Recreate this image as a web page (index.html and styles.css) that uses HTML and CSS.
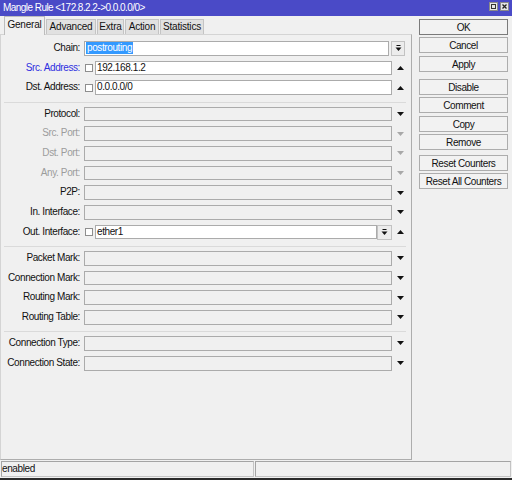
FILE: index.html
```html
<!DOCTYPE html>
<html>
<head>
<meta charset="utf-8">
<link rel="stylesheet" href="styles.css">
</head>
<body>
<div class="titlebar">
  <span class="title">Mangle Rule &lt;172.8.2.2-&gt;0.0.0.0/0&gt;</span>
  <div class="tbtns">
    <svg class="tbtn" width="9" height="9" viewBox="0 0 9 9"><rect x="0.5" y="0.5" width="8" height="8" fill="#e6e6e6" stroke="#8a8a8a"/><rect x="2.5" y="2.5" width="4" height="4" fill="none" stroke="#333"/></svg>
    <svg class="tbtn" width="9" height="9" viewBox="0 0 9 9"><rect x="0.5" y="0.5" width="8" height="8" fill="#e6e6e6" stroke="#8a8a8a"/><path d="M2.5 2.5 L6.5 6.5 M6.5 2.5 L2.5 6.5" stroke="#222" stroke-width="1.3"/></svg>
  </div>
</div>
<div class="content">
  <div class="main">
    <div class="tabs">
      <div class="tab active t-general">General</div>
      <div class="tab t-advanced">Advanced</div>
      <div class="tab t-extra">Extra</div>
      <div class="tab t-action">Action</div>
      <div class="tab t-stats">Statistics</div>
    </div>
    <div class="panel">
      <div class="group">
        <div class="row">
          <div class="lbl">Chain:</div>
          <div class="field chain">
            <div class="inp w"><span class="sel">postrouting</span></div>
            <div class="bdd"><svg width="7" height="7" viewBox="0 0 7 7"><rect x="1.5" y="0" width="4" height="1" fill="#111"/><polygon points="0.5,2.5 6.5,2.5 3.5,6" fill="#111"/></svg></div>
          </div>
        </div>
        <div class="row">
          <div class="lbl blue">Src. Address:</div>
          <div class="field"><div class="cb"></div><div class="inp w">192.168.1.2</div></div>
          <div class="arr"><svg width="7" height="4" viewBox="0 0 7 4"><polygon points="3.5,0 7,4 0,4" fill="#111"/></svg></div>
        </div>
        <div class="row">
          <div class="lbl">Dst. Address:</div>
          <div class="field"><div class="cb"></div><div class="inp w">0.0.0.0/0</div></div>
          <div class="arr"><svg width="7" height="4" viewBox="0 0 7 4"><polygon points="3.5,0 7,4 0,4" fill="#111"/></svg></div>
        </div>
      </div>
      <div class="sep"></div>
      <div class="group">
        <div class="row">
          <div class="lbl">Protocol:</div>
          <div class="field"><div class="inp"></div></div>
          <div class="arr"><svg width="7" height="4" viewBox="0 0 7 4"><polygon points="0,0 7,0 3.5,4" fill="#111"/></svg></div>
        </div>
        <div class="row">
          <div class="lbl dis">Src. Port:</div>
          <div class="field"><div class="inp"></div></div>
          <div class="arr"><svg width="7" height="4" viewBox="0 0 7 4"><polygon points="0,0 7,0 3.5,4" fill="#a8a8a8"/></svg></div>
        </div>
        <div class="row">
          <div class="lbl dis">Dst. Port:</div>
          <div class="field"><div class="inp"></div></div>
          <div class="arr"><svg width="7" height="4" viewBox="0 0 7 4"><polygon points="0,0 7,0 3.5,4" fill="#a8a8a8"/></svg></div>
        </div>
        <div class="row">
          <div class="lbl dis">Any. Port:</div>
          <div class="field"><div class="inp"></div></div>
          <div class="arr"><svg width="7" height="4" viewBox="0 0 7 4"><polygon points="0,0 7,0 3.5,4" fill="#a8a8a8"/></svg></div>
        </div>
        <div class="row">
          <div class="lbl">P2P:</div>
          <div class="field"><div class="inp"></div></div>
          <div class="arr"><svg width="7" height="4" viewBox="0 0 7 4"><polygon points="0,0 7,0 3.5,4" fill="#111"/></svg></div>
        </div>
        <div class="row">
          <div class="lbl">In. Interface:</div>
          <div class="field"><div class="inp"></div></div>
          <div class="arr"><svg width="7" height="4" viewBox="0 0 7 4"><polygon points="0,0 7,0 3.5,4" fill="#111"/></svg></div>
        </div>
        <div class="row">
          <div class="lbl">Out. Interface:</div>
          <div class="field"><div class="cb"></div><div class="inp w">ether1</div>
            <div class="bdd out"><svg width="7" height="7" viewBox="0 0 7 7"><rect x="1.5" y="0" width="4" height="1" fill="#111"/><polygon points="0.5,2.5 6.5,2.5 3.5,6" fill="#111"/></svg></div>
          </div>
          <div class="arr"><svg width="7" height="4" viewBox="0 0 7 4"><polygon points="3.5,0 7,4 0,4" fill="#111"/></svg></div>
        </div>
      </div>
      <div class="sep"></div>
      <div class="group">
        <div class="row">
          <div class="lbl">Packet Mark:</div>
          <div class="field"><div class="inp"></div></div>
          <div class="arr"><svg width="7" height="4" viewBox="0 0 7 4"><polygon points="0,0 7,0 3.5,4" fill="#111"/></svg></div>
        </div>
        <div class="row">
          <div class="lbl">Connection Mark:</div>
          <div class="field"><div class="inp"></div></div>
          <div class="arr"><svg width="7" height="4" viewBox="0 0 7 4"><polygon points="0,0 7,0 3.5,4" fill="#111"/></svg></div>
        </div>
        <div class="row">
          <div class="lbl">Routing Mark:</div>
          <div class="field"><div class="inp"></div></div>
          <div class="arr"><svg width="7" height="4" viewBox="0 0 7 4"><polygon points="0,0 7,0 3.5,4" fill="#111"/></svg></div>
        </div>
        <div class="row">
          <div class="lbl">Routing Table:</div>
          <div class="field"><div class="inp"></div></div>
          <div class="arr"><svg width="7" height="4" viewBox="0 0 7 4"><polygon points="0,0 7,0 3.5,4" fill="#111"/></svg></div>
        </div>
      </div>
      <div class="sep"></div>
      <div class="group">
        <div class="row">
          <div class="lbl">Connection Type:</div>
          <div class="field"><div class="inp"></div></div>
          <div class="arr"><svg width="7" height="4" viewBox="0 0 7 4"><polygon points="0,0 7,0 3.5,4" fill="#111"/></svg></div>
        </div>
        <div class="row">
          <div class="lbl">Connection State:</div>
          <div class="field"><div class="inp"></div></div>
          <div class="arr"><svg width="7" height="4" viewBox="0 0 7 4"><polygon points="0,0 7,0 3.5,4" fill="#111"/></svg></div>
        </div>
      </div>
    </div>
  </div>
  <div class="side">
    <div class="btn ok">OK</div>
    <div class="btn">Cancel</div>
    <div class="btn">Apply</div>
    <div class="btn g2">Disable</div>
    <div class="btn">Comment</div>
    <div class="btn">Copy</div>
    <div class="btn">Remove</div>
    <div class="btn g3">Reset Counters</div>
    <div class="btn">Reset All Counters</div>
  </div>
</div>
<div class="status">
  <div class="cell first">enabled</div>
  <div class="cell second"></div>
</div>
<div class="frame"></div>
</body>
</html>
```

FILE: styles.css
```css
html, body {
  margin: 0;
  padding: 0;
}
body {
  width: 512px;
  height: 480px;
  overflow: hidden;
  background: #f0f0f0;
  font-family: "Liberation Sans", Arial, sans-serif;
  font-size: 10px;
  color: #111;
  letter-spacing: -0.4px;
}
.titlebar {
  height: 16px;
  background: #4a4ac7;
  color: #fff;
  display: flex;
  align-items: flex-start;
  padding-left: 3px;
}
.title {
  flex: 1;
  line-height: 16px;
  letter-spacing: -0.55px;
  white-space: nowrap;
}
.tbtns {
  display: flex;
  gap: 2px;
  padding-top: 2px;
  padding-right: 3px;
}
.tbtn {
  display: block;
}
.content {
  display: flex;
  height: 444px;
}
.main {
  width: 412px;
  display: flex;
  flex-direction: column;
}
.tabs {
  height: 18px;
  display: flex;
  align-items: flex-end;
  padding-left: 4px;
  position: relative;
  z-index: 1;
}
.tab {
  height: 15px;
  box-sizing: border-box;
  border: 1px solid #c4c4c4;
  border-bottom: none;
  background: #e1e1e1;
  margin-right: 1px;
  text-align: center;
  line-height: 14px;
  letter-spacing: -0.2px;
  white-space: nowrap;
}
.tab.active {
  height: 19px;
  margin-bottom: -1px;
  padding-top: 1px;
  background: #f0f0f0;
  border-color: #bdbdbd;
}
.t-general { width: 41px; }
.t-advanced { width: 50px; }
.t-extra { width: 27px; }
.t-action { width: 34px; }
.t-stats { width: 44px; }
.panel {
  height: 426px;
  box-sizing: border-box;
  border: 1px solid #d4d4d4;
  border-right-color: #adadad;
  border-bottom-color: #adadad;
  padding-top: 6px;
}
.row {
  display: flex;
  align-items: center;
  height: 14.7px;
}
.row + .row {
  margin-top: 5px;
}
.lbl {
  width: 81px;
  box-sizing: border-box;
  padding-right: 2px;
  text-align: right;
  white-space: nowrap;
  line-height: 14.7px;
}
.lbl.blue { color: #2f2fe0; }
.lbl.dis { color: #9c9c9c; }
.field {
  width: 308px;
  height: 100%;
  margin-left: 2px;
  display: flex;
  align-items: center;
}
.field.chain {
  width: 321px;
}
.inp {
  flex: 1;
  height: 100%;
  box-sizing: border-box;
  border: 1px solid #ababab;
  background: #f0f0f0;
  padding-left: 1px;
  line-height: 12.7px;
  white-space: nowrap;
  overflow: hidden;
}
.inp.w {
  background: #fff;
}
.sel {
  display: inline-block;
  background: #3399ff;
  color: #fff;
  padding: 0 1px;
  line-height: 12px;
  vertical-align: top;
}
.cb {
  flex: none;
  width: 8px;
  height: 8px;
  box-sizing: border-box;
  border: 1px solid #8e8e8e;
  background: #fff;
  margin: 0 2px 0 1px;
}
.bdd {
  flex: none;
  width: 14px;
  height: 15px;
  box-sizing: border-box;
  margin-left: 2px;
  border: 1px solid #c2c2c2;
  background: #ececec;
  display: flex;
  align-items: center;
  justify-content: center;
}
.bdd.out {
  width: 15px;
  margin-left: 0;
}
.bdd svg, .arr svg {
  display: block;
}
.arr {
  width: 19px;
  box-sizing: border-box;
  padding-left: 5px;
  display: flex;
  align-items: center;
}
.sep {
  height: 1px;
  background: #dadada;
  margin: 6.5px 5px 4px 3px;
}
.side {
  margin-left: 7px;
  width: 89px;
  padding-top: 3px;
  display: flex;
  flex-direction: column;
  gap: 2.4px;
}
.btn {
  height: 16px;
  box-sizing: border-box;
  border: 1px solid #adadad;
  background: #f2f2f2;
  text-align: center;
  line-height: 14px;
  padding-top: 1px;
  white-space: nowrap;
}
.btn.ok {
  border-color: #7a7a7a;
}
.btn.g2 { margin-top: 4.8px; }
.btn.g3 { margin-top: 2.4px; }
.status {
  height: 18px;
  box-sizing: border-box;
  padding: 1px 1px 1px 1px;
  display: flex;
}
.cell {
  height: 16px;
  box-sizing: border-box;
  border: 1px solid #c4c4c4;
  border-top-color: #a4a4a4;
  border-left-color: #a4a4a4;
  line-height: 14px;
  white-space: nowrap;
}
.cell.first {
  width: 253px;
  margin-right: 1px;
}
.cell.second {
  flex: 1;
}
.frame {
  height: 2px;
  background: #2b2b2b;
}
```
